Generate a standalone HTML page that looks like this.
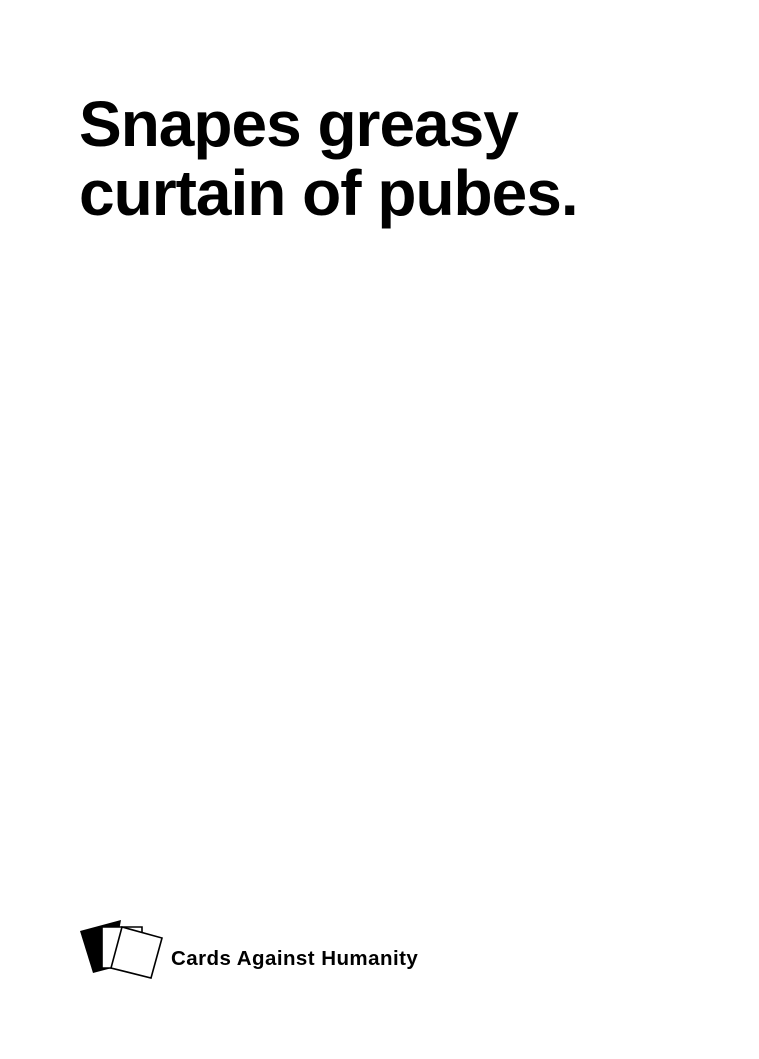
<!DOCTYPE html>
<html><head><style>
html,body{margin:0;padding:0;background:#fff;width:759px;height:1059px;overflow:hidden;position:relative}
h1{position:absolute;left:79px;top:90px;margin:0;font:bold 64px/69px "Liberation Sans",sans-serif;letter-spacing:-1px;color:#000}
.t{position:absolute;left:171px;top:947px;font:bold 20.5px "Liberation Sans",sans-serif;color:#000;letter-spacing:0.45px}
svg{position:absolute;left:0;top:0}
</style></head><body>
<h1>Snapes greasy<br>curtain of pubes.</h1>
<svg width="759" height="1059">
<polygon points="80,931 121,920 112,968 93,973" fill="#000"/>
<polygon points="102,927 142,927 142,968 102,968" fill="#fff" stroke="#000" stroke-width="1.6"/>
<polygon points="122,927 162,938 151,978 111,968" fill="#fff" stroke="#000" stroke-width="1.6"/>
</svg>
<div class="t">Cards Against Humanity</div>
</body></html>
